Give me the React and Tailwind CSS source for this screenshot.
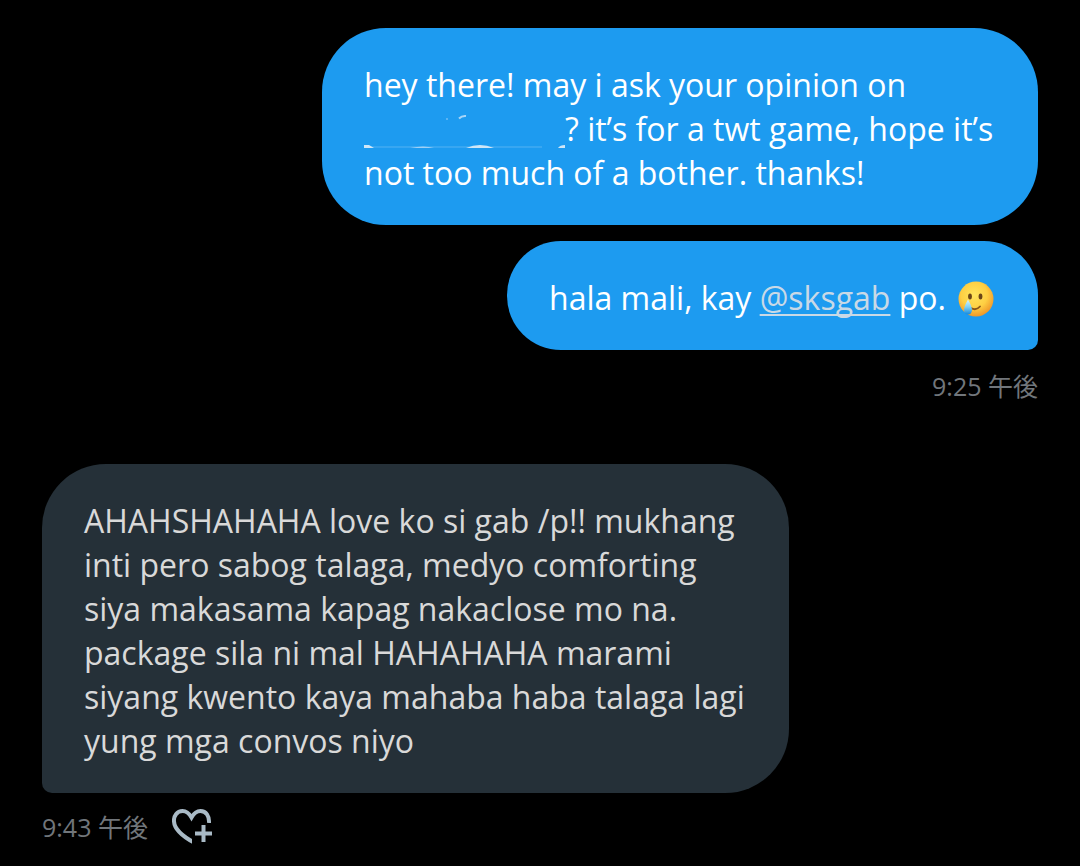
import clsx from "clsx";

function Bubble({ mine, className, children }) {
  return (
    <div
      className={clsx(
        "max-w-full px-[42px] pt-[35px] pb-[30px] text-[32px] leading-[44px]",
        mine ? "bg-[#1d9bf0] text-white" : "bg-[#253038] text-[#d9d9d9]",
        className
      )}
    >
      {children}
    </div>
  );
}

function ErasedName() {
  return (
    <svg
      className="inline-block h-9 w-[201px] align-[-9px]"
      viewBox="0 0 201 36"
      fill="none"
      aria-hidden="true"
    >
      <path d="M95 4.5q3-3 7-2.5" stroke="#a9d6f8" strokeWidth="2" />
      <circle cx="83" cy="5" r="1" fill="#6fbcf5" />
      <path d="M0 33h178" stroke="#54b2f3" strokeWidth="1" />
      <path d="M0 31h5l5 3H0z" fill="#cfe6f7" />
      <path d="M46 34q14-3 24 0z" fill="#9fd0f6" />
      <path d="M102 34q7-3 14-3t14 3z" fill="#cfe6f7" />
      <path d="M194 34q2-3 7-3v3z" fill="#cfe6f7" />
    </svg>
  );
}

function TearEmoji() {
  return (
    <svg
      className="ml-1 inline-block size-9 align-[-7px]"
      viewBox="0 0 36 36"
      role="img"
      aria-label="smiling face with tear"
    >
      <defs>
        <radialGradient id="face" cx="45%" cy="38%" r="62%">
          <stop offset="0" stopColor="#ffe45c" />
          <stop offset="0.6" stopColor="#fecf43" />
          <stop offset="1" stopColor="#f0982a" />
        </radialGradient>
        <linearGradient id="tear" x1="0" y1="0" x2="0" y2="1">
          <stop offset="0" stopColor="#d9f5ff" />
          <stop offset="0.5" stopColor="#7fd0f5" />
          <stop offset="1" stopColor="#1488dc" />
        </linearGradient>
      </defs>
      <circle cx="18" cy="18" r="17.5" fill="url(#face)" />
      <ellipse cx="12" cy="15.5" rx="1.9" ry="3" fill="#6b4518" />
      <ellipse cx="22.5" cy="15.5" rx="1.9" ry="3" fill="#6b4518" />
      <path d="M13 27q5 3 9-1.500" stroke="#8a5518" strokeWidth="1.8" strokeLinecap="round" fill="none" />
      <path d="M10 18.500q-4 7-4 10.500a4 4.500 0 0 0 8 0q0-3.500-4-10.500z" fill="url(#tear)" />
    </svg>
  );
}

function HeartPlusIcon() {
  return (
    <svg className="h-9 w-10" viewBox="0 0 40 36" fill="none" stroke="#a9bac6" strokeWidth="4" aria-hidden="true">
      <clipPath id="heart-cut">
        <path d="M0 0h40v14H20v22H0z" />
      </clipPath>
      <path
        clipPath="url(#heart-cut)"
        d="M37 14C37.500 7 34 2 28.500 2C24.500 2 21.500 5 19.500 8.500C17.500 5 14.500 2 10.500 2C5 2 1.500 7 2 12.500C2.500 20 10 27 22 33.500"
      />
      <path d="M31.500 16v17M23 24.500h17" />
    </svg>
  );
}

export default function App() {
  return (
    <main className="flex min-h-screen flex-col bg-black px-[42px] pt-7 pb-5 font-['Open_Sans','Noto_Sans_CJK_JP',sans-serif]">
      <section className="flex flex-col items-end">
        <Bubble mine className="mb-4 w-[716px] rounded-[64px]">
          <p>
            hey there! may i ask your opinion on
            <br />
            <ErasedName />? it’s for a twt game, hope it’s
            <br />
            not too much of a bother. thanks!
          </p>
        </Bubble>
        <Bubble mine className="w-[531px] rounded-[54px] rounded-br-[10px]">
          <p>
            hala mali, kay{" "}
            <a
              href="#sksgab"
              className="text-[#c9d9e6] underline decoration-2 underline-offset-4 [text-decoration-skip-ink:none]"
            >
              @sksgab
            </a>{" "}
            po. <TearEmoji />
          </p>
        </Bubble>
        <time className="mt-5 text-[25px] leading-8 text-[#71767b]">9:25 午後</time>
      </section>

      <section className="mt-[62px] flex flex-col items-start">
        <Bubble className="w-[747px] rounded-[64px] rounded-bl-[10px]">
          <p>
            AHAHSHAHAHA love ko si gab /p!! mukhang
            <br />
            inti pero sabog talaga, medyo comforting
            <br />
            siya makasama kapag nakaclose mo na.
            <br />
            package sila ni mal HAHAHAHA marami
            <br />
            siyang kwento kaya mahaba haba talaga lagi
            <br />
            yung mga convos niyo
          </p>
        </Bubble>
        <div className="mt-4 flex items-center gap-6">
          <time className="text-[25px] leading-8 text-[#71767b]">9:43 午後</time>
          <button type="button" aria-label="Add reaction">
            <HeartPlusIcon />
          </button>
        </div>
      </section>
    </main>
  );
}
